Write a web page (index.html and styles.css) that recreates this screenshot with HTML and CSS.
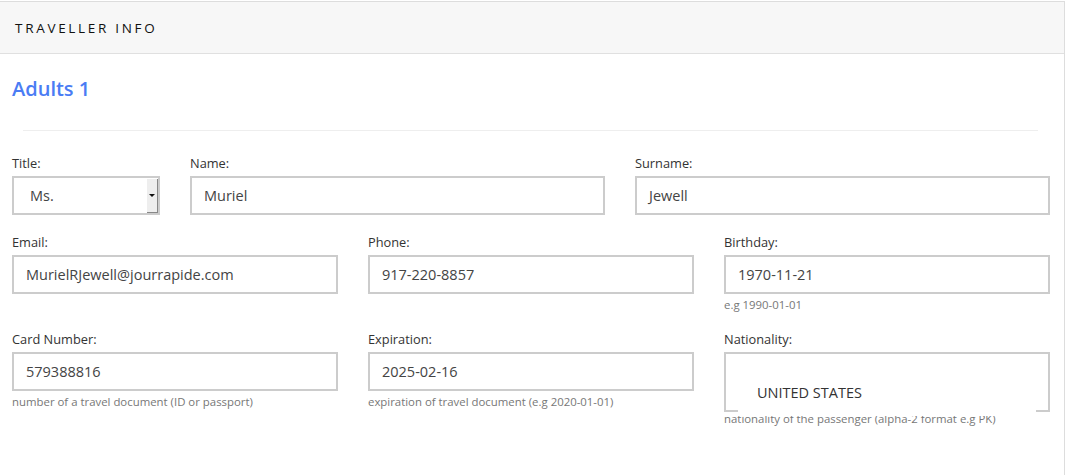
FILE: index.html
```html
<!DOCTYPE html>
<html>
<head>
<meta charset="utf-8">
<link rel="stylesheet" href="styles.css">
</head>
<body>
<div class="panel">
  <div class="panel-head">TRAVELLER INFO</div>
  <div class="panel-body">
    <h3 class="adult-title">Adults 1</h3>
    <hr class="sep">
    <div class="row row-1">
      <div class="group">
        <label class="lbl">Title:</label>
        <div class="select">
          <span class="select-val">Ms.</span>
          <span class="select-btn"><span class="tri"></span></span>
        </div>
      </div>
      <div class="group">
        <label class="lbl">Name:</label>
        <div class="input">Muriel</div>
      </div>
      <div class="group">
        <label class="lbl">Surname:</label>
        <div class="input">Jewell</div>
      </div>
    </div>
    <div class="row row-3">
      <div class="group">
        <label class="lbl">Email:</label>
        <div class="input">MurielRJewell@jourrapide.com</div>
      </div>
      <div class="group">
        <label class="lbl">Phone:</label>
        <div class="input">917-220-8857</div>
      </div>
      <div class="group">
        <label class="lbl">Birthday:</label>
        <div class="input">1970-11-21</div>
        <div class="help">e.g 1990-01-01</div>
      </div>
    </div>
    <div class="row row-3">
      <div class="group">
        <label class="lbl">Card Number:</label>
        <div class="input">579388816</div>
        <div class="help">number of a travel document (ID or passport)</div>
      </div>
      <div class="group">
        <label class="lbl">Expiration:</label>
        <div class="input">2025-02-16</div>
        <div class="help">expiration of travel document (e.g 2020-01-01)</div>
      </div>
      <div class="group">
        <label class="lbl">Nationality:</label>
        <div class="nat-box">
          <div class="nat-val">UNITED STATES</div>
        </div>
        <div class="help help-nat">nationality of the passenger (alpha-2 format e.g PK)</div>
      </div>
    </div>
  </div>
</div>
</body>
</html>
```
FILE: styles.css
```css
html, body {
  margin: 0;
  padding: 0;
  background: #fff;
  font-family: "Open Sans", "DejaVu Sans", sans-serif;
  color: #333;
}

.panel {
  margin-top: 1px;
  width: 1065px;
  border-top: 1px solid #dddddd;
  border-right: 1px solid #dddddd;
  min-height: 490px;
  box-sizing: border-box;
}

.panel-head {
  height: 52px;
  background: #f7f7f7;
  border-bottom: 1px solid #e0e0e0;
  padding-left: 15px;
  display: flex;
  align-items: center;
  font-size: 13.5px;
  letter-spacing: 2.7px;
  color: #111;
  padding-top: 1px;
  box-sizing: border-box;
}

.panel-body {
  padding: 0 14px 0 12px;
}

.adult-title {
  margin: 0;
  padding-top: 22px;
  font-size: 20px;
  font-weight: 600;
  line-height: 26px;
  color: #4a7cf4;
}

.sep {
  border: 0;
  border-top: 1px solid #eeeeee;
  margin: 28px 12px 23px 11px;
}

.row {
  display: grid;
  column-gap: 30px;
  margin-bottom: 18px;
}

.row-1 {
  grid-template-columns: 148px 1fr 1fr;
}

.row-3 {
  grid-template-columns: 1fr 1fr 1fr;
}

.group {
  display: flex;
  flex-direction: column;
  min-width: 0;
}

.lbl {
  font-size: 12.8px;
  line-height: 18px;
  margin-bottom: 4px;
  color: #333;
}

.input {
  height: 39px;
  box-sizing: border-box;
  border: 2px solid #cccccc;
  padding-left: 12px;
  display: flex;
  align-items: center;
  font-size: 14.5px;
  color: #444;
  background: #fff;
}

.select {
  height: 39px;
  box-sizing: border-box;
  border: 2px solid #cccccc;
  display: flex;
  align-items: stretch;
  background: #fff;
}

.select-val {
  flex: 1;
  display: flex;
  align-items: center;
  padding-left: 16px;
  font-size: 14.5px;
  color: #444;
}

.select-btn {
  width: 10px;
  background: #eeeeee;
  border-right: 1px solid #888;
  border-bottom: 1px solid #888;
  display: flex;
  align-items: center;
  justify-content: center;
  margin: 1px 0 0 0;
}

.tri {
  width: 0;
  height: 0;
  border-left: 3px solid transparent;
  border-right: 3px solid transparent;
  border-top: 3px solid #111;
}

.help {
  font-size: 11.4px;
  line-height: 14px;
  margin-top: 4px;
  color: #777;
}

.nat-box {
  position: relative;
  height: 60px;
  box-sizing: border-box;
  border: 2px solid #cccccc;
  background: #fff;
}

.nat-val {
  position: absolute;
  left: 12px;
  right: 12px;
  bottom: -6px;
  height: 36px;
  background: #fff;
  padding-left: 19px;
  display: flex;
  align-items: center;
  font-size: 14.5px;
  color: #333;
  z-index: 1;
  box-sizing: border-box;
  padding-bottom: 12px;
}

.help-nat {
  margin-top: 0;
  position: relative;
}
```
